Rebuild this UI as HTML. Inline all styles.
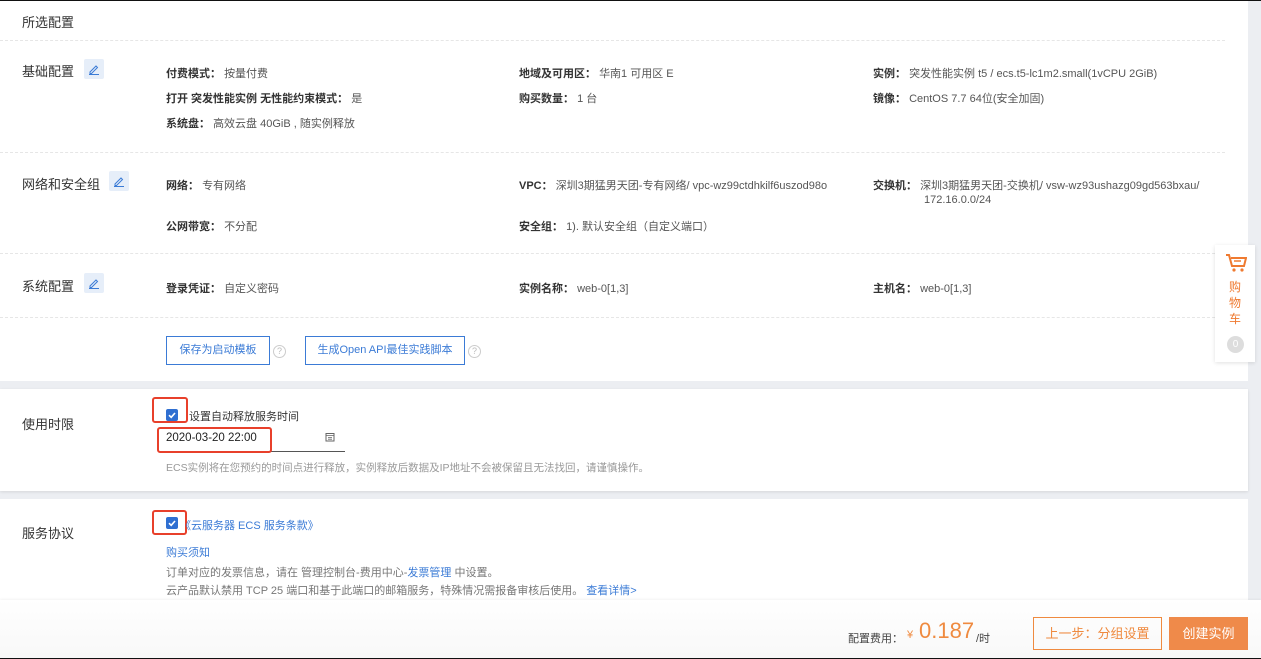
<!DOCTYPE html>
<html><head><meta charset="utf-8"><style>
*{margin:0;padding:0;box-sizing:border-box}
body{width:1261px;height:659px;overflow:hidden;background:#eceef2;font-family:"Liberation Sans","Noto Sans CJK SC",sans-serif;color:#333;position:relative;font-size:11px}
.a{position:absolute;white-space:nowrap}
.card{position:absolute;left:0;width:1248px;background:#fff}
.h{font-size:13px;color:#333}
.k{font-weight:bold;color:#333}
.v{color:#555}
.dash{position:absolute;left:0;width:1225px;border-top:1px dashed #e6e6e6;height:0}
.ed{position:absolute;width:20px;height:20px;background:#e6eef9;border-radius:2px}
.ed svg{position:absolute;left:4px;top:4px}
.cb{position:absolute;width:12px;height:12px;background:#2f6fd1;border-radius:2px}
.cb svg{position:absolute;left:0;top:0}
.red{position:absolute;border:2px solid #e8402b;border-radius:3px}
.q{position:absolute;width:13px;height:13px;border:1px solid #ccc;border-radius:50%;color:#bbb;font-size:9px;text-align:center;line-height:11px}
</style></head><body>
<div style="position:absolute;left:0;top:0;width:1261px;height:1px;background:#111;z-index:5"></div>
<div style="position:absolute;left:0;top:658px;width:1261px;height:1px;background:#111;z-index:5"></div>

<div class="card" style="top:0;height:381px"></div>
<div class="a h" style="left:22px;top:12px">所选配置</div>
<div class="dash" style="top:40px"></div>

<div class="a h" style="left:22px;top:61px">基础配置</div>
<div class="ed" style="left:84px;top:59px"><svg width="12" height="12" viewBox="0 0 12 12"><path d="M2 9 L8 3 L9.5 4.5 L3.5 10.5 L2 10.5 Z M1 11.5 H11" stroke="#3b7bd6" fill="none" stroke-width="1"/></svg></div>
<div class="a" style="left:166px;top:65px"><span class="k">付费模式：</span> <span class="v">按量付费</span></div>
<div class="a" style="left:166px;top:90px"><span class="k">打开 突发性能实例 无性能约束模式：</span> <span class="v">是</span></div>
<div class="a" style="left:166px;top:115px"><span class="k">系统盘：</span> <span class="v">高效云盘 40GiB , 随实例释放</span></div>
<div class="a" style="left:519px;top:65px"><span class="k">地域及可用区：</span> <span class="v">华南1 可用区 E</span></div>
<div class="a" style="left:519px;top:90px"><span class="k">购买数量：</span> <span class="v">1 台</span></div>
<div class="a" style="left:873px;top:65px"><span class="k">实例：</span> <span class="v">突发性能实例 t5 / ecs.t5-lc1m2.small(1vCPU 2GiB)</span></div>
<div class="a" style="left:873px;top:90px"><span class="k">镜像：</span> <span class="v">CentOS 7.7 64位(安全加固)</span></div>
<div class="dash" style="top:152px"></div>

<div class="a h" style="left:22px;top:174px">网络和安全组</div>
<div class="ed" style="left:109px;top:171px"><svg width="12" height="12" viewBox="0 0 12 12"><path d="M2 9 L8 3 L9.5 4.5 L3.5 10.5 L2 10.5 Z M1 11.5 H11" stroke="#3b7bd6" fill="none" stroke-width="1"/></svg></div>
<div class="a" style="left:166px;top:177px"><span class="k">网络：</span> <span class="v">专有网络</span></div>
<div class="a" style="left:166px;top:218px"><span class="k">公网带宽：</span> <span class="v">不分配</span></div>
<div class="a" style="left:519px;top:177px"><span class="k">VPC：</span> <span class="v">深圳3期猛男天团-专有网络/ vpc-wz99ctdhkilf6uszod98o</span></div>
<div class="a" style="left:519px;top:218px"><span class="k">安全组：</span> <span class="v">1). 默认安全组（自定义端口）</span></div>
<div class="a" style="left:873px;top:177px"><span class="k">交换机：</span> <span class="v">深圳3期猛男天团-交换机/ vsw-wz93ushazg09gd563bxau/</span></div>
<div class="a v" style="left:924px;top:194px">172.16.0.0/24</div>
<div class="dash" style="top:253px"></div>

<div class="a h" style="left:22px;top:276px">系统配置</div>
<div class="ed" style="left:84px;top:273px"><svg width="12" height="12" viewBox="0 0 12 12"><path d="M2 9 L8 3 L9.5 4.5 L3.5 10.5 L2 10.5 Z M1 11.5 H11" stroke="#3b7bd6" fill="none" stroke-width="1"/></svg></div>
<div class="a" style="left:166px;top:280px"><span class="k">登录凭证：</span> <span class="v">自定义密码</span></div>
<div class="a" style="left:519px;top:280px"><span class="k">实例名称：</span> <span class="v">web-0[1,3]</span></div>
<div class="a" style="left:873px;top:280px"><span class="k">主机名：</span> <span class="v">web-0[1,3]</span></div>
<div class="dash" style="top:317px"></div>

<div class="a" style="left:166px;top:336px;width:104px;height:29px;border:1px solid #3b7bd6;color:#3b7bd6;text-align:center;line-height:27px">保存为启动模板</div>
<div class="q" style="left:273px;top:345px">?</div>
<div class="a" style="left:305px;top:336px;width:160px;height:29px;border:1px solid #3b7bd6;color:#3b7bd6;text-align:center;line-height:27px">生成Open API最佳实践脚本</div>
<div class="q" style="left:468px;top:345px">?</div>

<div class="card" style="top:389px;height:102px;box-shadow:0 1px 3px rgba(0,0,0,.1)"></div>
<div class="a h" style="left:22px;top:414px">使用时限</div>
<div class="cb" style="left:166px;top:409px"><svg width="12" height="12" viewBox="0 0 12 12"><path d="M3 6.2 L5.2 8.3 L9 4" stroke="#fff" stroke-width="1.6" fill="none"/></svg></div>
<div class="red" style="left:152px;top:397px;width:36px;height:26px"></div>
<div class="a" style="left:189px;top:408px">设置自动释放服务时间</div>
<div class="a" style="left:166px;top:432px;width:179px;height:20px;border-bottom:1px solid #555;font-size:11.5px;color:#222">2020-03-20 22:00</div>
<svg class="a" style="left:325px;top:432px" width="10" height="10" viewBox="0 0 10 10"><rect x="1" y="1.5" width="8" height="7.5" fill="none" stroke="#666"/><path d="M1 3.5H9M3 5.5H7M3 7.2H7" stroke="#666" stroke-width=".8"/></svg>
<div class="red" style="left:157px;top:427px;width:115px;height:26px"></div>
<div class="a" style="left:166px;top:460px;color:#999;font-size:10.5px">ECS实例将在您预约的时间点进行释放，实例释放后数据及IP地址不会被保留且无法找回，请谨慎操作。</div>

<div class="card" style="top:499px;height:101px"></div>
<div class="a h" style="left:22px;top:523px">服务协议</div>
<div class="cb" style="left:166px;top:517px"><svg width="12" height="12" viewBox="0 0 12 12"><path d="M3 6.2 L5.2 8.3 L9 4" stroke="#fff" stroke-width="1.6" fill="none"/></svg></div>
<div class="red" style="left:152px;top:510px;width:35px;height:25px"></div>
<div class="a" style="left:180px;top:517px;color:#3b7bd6">《云服务器 ECS 服务条款》</div>
<div class="a" style="left:166px;top:544px;color:#3b7bd6">购买须知</div>
<div class="a" style="left:166px;top:564px;color:#777">订单对应的发票信息，请在 管理控制台-费用中心-<span style="color:#3b7bd6">发票管理</span> 中设置。</div>
<div class="a" style="left:166px;top:582px;color:#777">云产品默认禁用 TCP 25 端口和基于此端口的邮箱服务，特殊情况需报备审核后使用。 <span style="color:#3b7bd6">查看详情&gt;</span></div>

<div class="a" style="left:0;top:600px;width:1261px;height:58px;background:linear-gradient(#fff,#f8f8f8);box-shadow:0 -1px 2px rgba(0,0,0,.05)"></div>
<div class="a" style="left:848px;top:630px;color:#444">配置费用：</div>
<div class="a" style="left:907px;top:629px;color:#ef8a3f">¥</div>
<div class="a" style="left:919px;top:618px;color:#ef8a3f;font-size:22px">0.187</div>
<div class="a" style="left:976px;top:630px;color:#444">/时</div>
<div class="a" style="left:1033px;top:617px;width:129px;height:33px;border:1px solid #ef8a3f;color:#ef8a3f;font-size:13px;text-align:center;line-height:31px">上一步：分组设置</div>
<div class="a" style="left:1169px;top:617px;width:79px;height:33px;background:#ef8a4a;color:#fff;font-size:13px;text-align:center;line-height:33px">创建实例</div>

<div class="a" style="left:1215px;top:245px;width:40px;height:117px;background:#fff;box-shadow:0 1px 4px rgba(0,0,0,.12)"></div>
<svg class="a" style="left:1225px;top:253px" width="22" height="20" viewBox="0 0 22 20"><path d="M1 2H4L7 13H19L21 5H6" fill="none" stroke="#ef7a30" stroke-width="2"/><path d="M9 8H16" stroke="#ef7a30" stroke-width="1.5"/><circle cx="9" cy="17" r="1.6" fill="#ef7a30"/><circle cx="17" cy="17" r="1.6" fill="#ef7a30"/></svg>
<div class="a" style="left:1229px;top:279px;color:#ef7a30;font-size:12px;line-height:16px;white-space:normal;width:14px">购物车</div>
<div class="a" style="left:1227px;top:336px;width:17px;height:17px;border-radius:50%;background:#ddd;color:#fff;font-size:10px;text-align:center;line-height:17px">0</div>
</body></html>
